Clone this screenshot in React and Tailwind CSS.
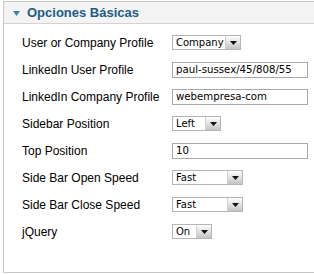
import React from 'react';

const rows = [
  { label: 'User or Company Profile', type: 'select', value: 'Company', w: 'w-[69px]' },
  { label: 'LinkedIn User Profile', type: 'input', value: 'paul-sussex/45/808/55' },
  { label: 'LinkedIn Company Profile', type: 'input', value: 'webempresa-com' },
  { label: 'Sidebar Position', type: 'select', value: 'Left', w: 'w-[49px]' },
  { label: 'Top Position', type: 'input', value: '10' },
  { label: 'Side Bar Open Speed', type: 'select', value: 'Fast', w: 'w-[71px]' },
  { label: 'Side Bar Close Speed', type: 'select', value: 'Fast', w: 'w-[71px]' },
  { label: 'jQuery', type: 'select', value: 'On', w: 'w-[40px]' },
];

const lucida = { fontFamily: '"DejaVu Sans", Verdana, sans-serif' };

function Select({ value, w }) {
  return (
    <div className={`flex h-[15px] items-stretch border border-[#b5b5b5] bg-white ${w}`}>
      <span className="flex-1 pl-[3px] text-[10px] leading-[13px] text-black" style={lucida}>{value}</span>
      <span className="flex w-[15px] items-center justify-center bg-gradient-to-b from-[#ffffff] to-[#c4c4c4] border-l border-[#d0d0d0]">
        <svg width="7" height="4" viewBox="0 0 7 4"><path d="M0 0h7L3.5 4z" fill="#111" /></svg>
      </span>
    </div>
  );
}

export default function App() {
  return (
    <div className="h-[274px] w-[314px] overflow-hidden bg-white pl-[3px] pt-px" style={{ fontFamily: '"Liberation Sans", Arial, sans-serif' }}>
      <div className="h-[272px] w-[330px] border border-[#c8c8c8] bg-white">
        <div className="flex h-[22px] items-center border-b border-[#d2d2d2] bg-[#f3f3f3] pl-[9px]">
          <svg width="7" height="5" viewBox="0 0 7 5" className="mr-[7px] mt-px"><path d="M0 0h7L3.5 5z" fill="#3585bd" /></svg>
          <span className="text-[13px] font-bold text-[#1e5c86]">Opciones Básicas</span>
        </div>
        <div className="pt-[5px]">
          {rows.map((r) => (
            <div key={r.label} className="flex h-[27px] items-center pl-[18px]">
              <span className="w-[150px] text-[12px] text-black">{r.label}</span>
              {r.type === 'select' ? (
                <Select value={r.value} w={r.w} />
              ) : (
                <div className="flex h-[16px] w-[136px] items-center border border-[#a8a8a8] bg-white pl-[3px] text-[10.2px] text-black" style={lucida}>
                  {r.value}
                </div>
              )}
            </div>
          ))}
        </div>
      </div>
    </div>
  );
}
